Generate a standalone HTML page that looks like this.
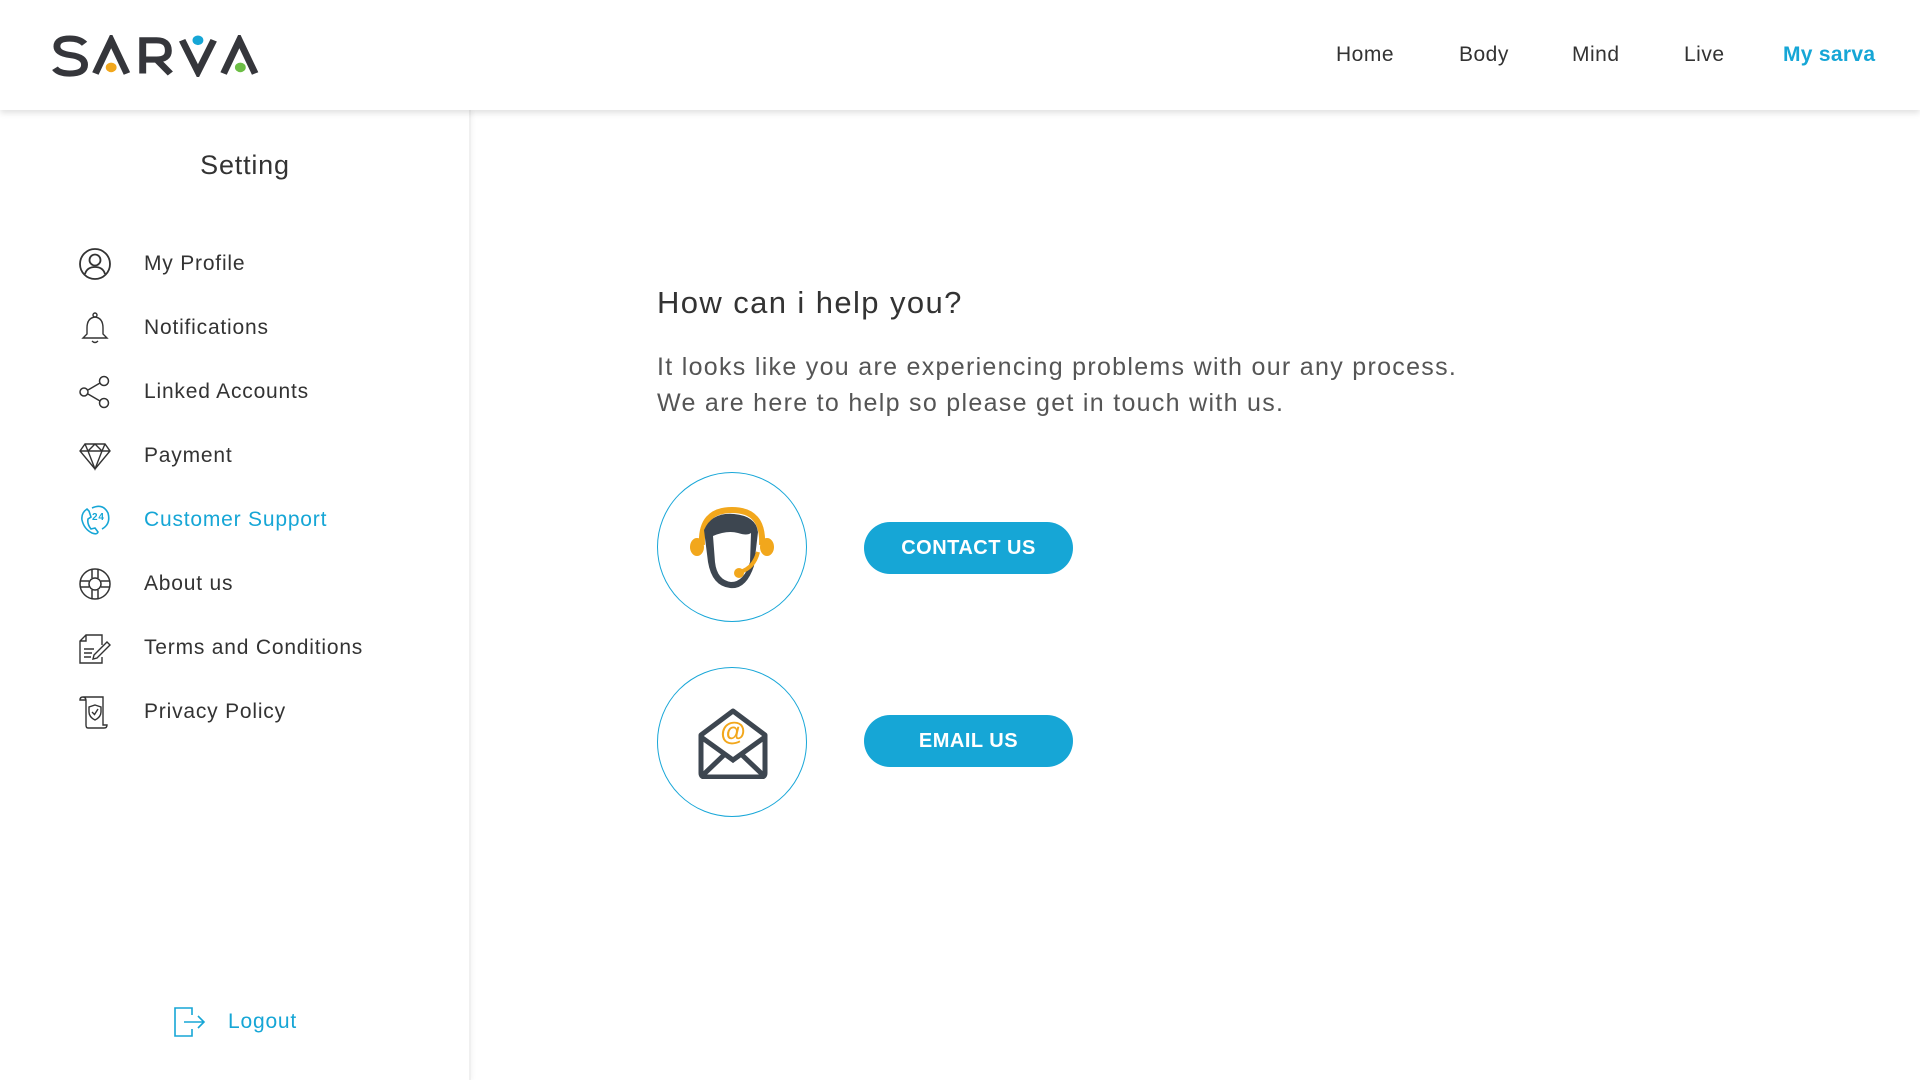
<!DOCTYPE html>
<html><head><meta charset="utf-8"><style>
*{margin:0;padding:0;box-sizing:border-box}
body{width:1920px;height:1080px;background:#fff;font-family:"Liberation Sans",sans-serif;color:#333;position:relative;overflow:hidden}
.header{position:absolute;left:0;top:0;width:1920px;height:110px;background:#fff;box-shadow:0 3px 6px rgba(0,0,0,.12);z-index:2}
.nav a{position:absolute;top:43px;font-size:21px;color:#333;text-decoration:none;letter-spacing:.5px}
.side{position:absolute;left:0;top:110px;width:471px;height:970px;border-right:2px solid #f0f0f0;box-shadow:2px 0 4px rgba(0,0,0,.04)}
.title{position:absolute;left:0;width:490px;text-align:center;top:150px;font-size:27px;color:#333;letter-spacing:.8px}
.item{position:absolute;left:78px;height:40px;display:flex;align-items:center;font-size:21px;color:#333;letter-spacing:.8px}
.item svg{width:34px;height:34px;margin-right:32px}
.item.act{color:#16a6d6}
h2{position:absolute;left:657px;top:285px;font-size:31px;font-weight:normal;color:#333;letter-spacing:1.4px}
p.t{position:absolute;left:657px;top:349px;font-size:25px;line-height:36px;color:#555;letter-spacing:1.3px}
.circ{position:absolute;width:150px;height:150px;border:1.3px solid #19a7d8;border-radius:50%;left:657px}
.btn{position:absolute;left:864px;width:209px;height:52px;border-radius:26px;background:#16a6d6;color:#fff;font-size:20px;font-weight:bold;display:flex;align-items:center;justify-content:center;letter-spacing:.5px}
</style></head><body>
<div class="header">
<svg style="position:absolute;left:52px;top:35px" width="212" height="42" viewBox="0 0 215 48" preserveAspectRatio="none">
<g fill="none" stroke="#35363b" stroke-width="7">
<path d="M33 10 Q28 4 18 4 Q5 4 5 13 Q5 21 19 23 Q33 25 33 34 Q33 44 18 44 Q7 44 3 38"/>
<path d="M44 44 L60 6 L76 44"/>
<path d="M92 44 V6 H106 Q118 6 118 18 Q118 28 106 28 H95 M106 28 L120 44"/>
<path d="M132 6 L148 42 L164 6"/>
<path d="M174 44 L190 6 L206 44"/>
</g>
<circle cx="60" cy="37" r="5.5" fill="#f2a71c"/><circle cx="148" cy="6" r="5.5" fill="#16a6d6"/><circle cx="191" cy="37" r="5.5" fill="#6cbe45"/>
</svg>
<div class="nav"><a style="left:1336px">Home</a><a style="left:1459px">Body</a><a style="left:1572px">Mind</a><a style="left:1684px">Live</a><a style="left:1783px;color:#16a6d6;font-weight:bold;letter-spacing:.3px">My sarva</a></div>
</div>
<div class="side">
<div class="title" style="top:40px">Setting</div>
</div>
<div class="item" style="top:244px"><svg viewBox="0 0 34 34" fill="none" stroke="#333" stroke-width="1.8"><circle cx="17" cy="17" r="15"/><circle cx="17" cy="13" r="5.5"/><path d="M7 27 Q9 20 17 20 Q25 20 27 27"/></svg>My Profile</div>
<div class="item" style="top:308px"><svg viewBox="0 0 34 34" fill="none" stroke="#333" stroke-width="1.4"><circle cx="17" cy="4" r="2"/><path d="M17 6 Q9 7 9 17 V23 L5 27 H29 L25 23 V17 Q25 7 17 6 M14 30 Q17 33 20 30"/></svg>Notifications</div>
<div class="item" style="top:372px"><svg viewBox="0 0 34 34" fill="none" stroke="#333" stroke-width="1.5"><circle cx="6" cy="17" r="4"/><circle cx="26" cy="6" r="4.5"/><circle cx="26" cy="28" r="4.5"/><path d="M10 15 L22 8 M10 19 L22 26"/></svg>Linked Accounts</div>
<div class="item" style="top:436px"><svg viewBox="0 0 34 34" fill="none" stroke="#333" stroke-width="1.4"><path d="M2 12 L7 5 H27 L32 12 L17 30 Z M2 12 H32 M7 5 L10 12 L17 5 L24 12 L27 5 M10 12 L17 30 L24 12"/></svg>Payment</div>
<div class="item act" style="top:500px"><svg viewBox="0 0 34 34" fill="none" stroke="#16a6d6" stroke-width="1.6"><path d="M9 6 Q3 10 4 17 Q6 26 14 30 Q19 32 20 29 L17 25 L13 26 Q9 21 10 16 L13 14 L11 8 Z"/><path d="M14 5 Q25 0 30 10 Q33 21 24 26"/><text x="14" y="17" font-size="10" fill="#16a6d6" stroke="none" font-weight="bold" font-family="Liberation Sans">24</text></svg>Customer Support</div>
<div class="item" style="top:564px"><svg viewBox="0 0 34 34" fill="none" stroke="#333" stroke-width="1.5"><circle cx="17" cy="17" r="15"/><circle cx="17" cy="17" r="6"/><path d="M14 2 V11 M20 2 V11 M14 23 V32 M20 23 V32 M2 14 H11 M2 20 H11 M23 14 H32 M23 20 H32"/></svg>About us</div>
<div class="item" style="top:628px"><svg viewBox="0 0 34 34" fill="none" stroke="#333" stroke-width="1.4"><path d="M24 14 V4 H8 L2 10 V32 H24 V26 M8 4 V10 H2 M6 18 H16 M6 22 H14 M6 26 H13 M16 24 L29 11 L32 14 L19 27 L15 28 Z"/></svg>Terms and Conditions</div>
<div class="item" style="top:692px"><svg viewBox="0 0 34 34" fill="none" stroke="#333" stroke-width="1.4"><path d="M5 2 H25 V30 H29 Q29 33 26 33 H10 Q8 33 8 30 V6 Q8 2 5 2 Q2 2 2 5 H8 M17 10 L23 12 V17 Q23 22 17 25 Q11 22 11 17 V12 Z M14 17 L16.5 19.5 L20 14"/></svg>Privacy Policy</div>
<div class="item act" style="top:1002px;left:172px"><svg viewBox="0 0 34 34" fill="none" stroke="#16a6d6" stroke-width="1.6" style="margin-right:22px"><path d="M20 10 V3 H3 V31 H20 V24 M12 17 H32 M26 11 L32 17 L26 23"/></svg>Logout</div>

<h2>How can i help you?</h2>
<p class="t">It looks like you are experiencing problems with our any process.<br>We are here to help so please get in touch with us.</p>
<div class="circ" style="top:472px"></div>
<svg style="position:absolute;left:682px;top:500px" width="100" height="95" viewBox="0 0 100 95">
<path d="M20 45 Q18 10 50 10 Q82 10 80 45" fill="none" stroke="#f2a71c" stroke-width="6"/>
<ellipse cx="15" cy="47" rx="7" ry="9" fill="#f2a71c"/><ellipse cx="85" cy="47" rx="7" ry="9" fill="#f2a71c"/>
<path d="M22 30 Q30 12 52 14 Q74 16 76 32 L72 66 Q64 90 48 88 Q30 86 26 62 Z" fill="#3d4650"/>
<path d="M31 36 Q45 30 56 33 Q65 36 69 33 L68 62 Q62 82 49 82 Q35 80 33 62 Z" fill="#fff"/>
<path d="M76 52 Q72 68 58 72" fill="none" stroke="#f2a71c" stroke-width="4"/><circle cx="57" cy="73" r="5" fill="#f2a71c"/>
</svg>
<div class="btn" style="top:522px">CONTACT US</div>
<div class="circ" style="top:667px"></div>
<svg style="position:absolute;left:697px;top:707px" width="72" height="72" viewBox="0 0 72 72">
<path d="M4 28 L36 4 L68 28 V66 Q68 70 64 70 H8 Q4 70 4 66 Z" fill="none" stroke="#3d4650" stroke-width="5" stroke-linejoin="round"/>
<path d="M4 30 L36 53 L68 30 M6 68 L28 47 M66 68 L44 47" fill="none" stroke="#3d4650" stroke-width="5"/>
<text x="36" y="33" text-anchor="middle" font-size="26" font-weight="bold" fill="#f2a71c" font-family="Liberation Sans">@</text>
</svg>
<div class="btn" style="top:715px">EMAIL US</div>
</body></html>
